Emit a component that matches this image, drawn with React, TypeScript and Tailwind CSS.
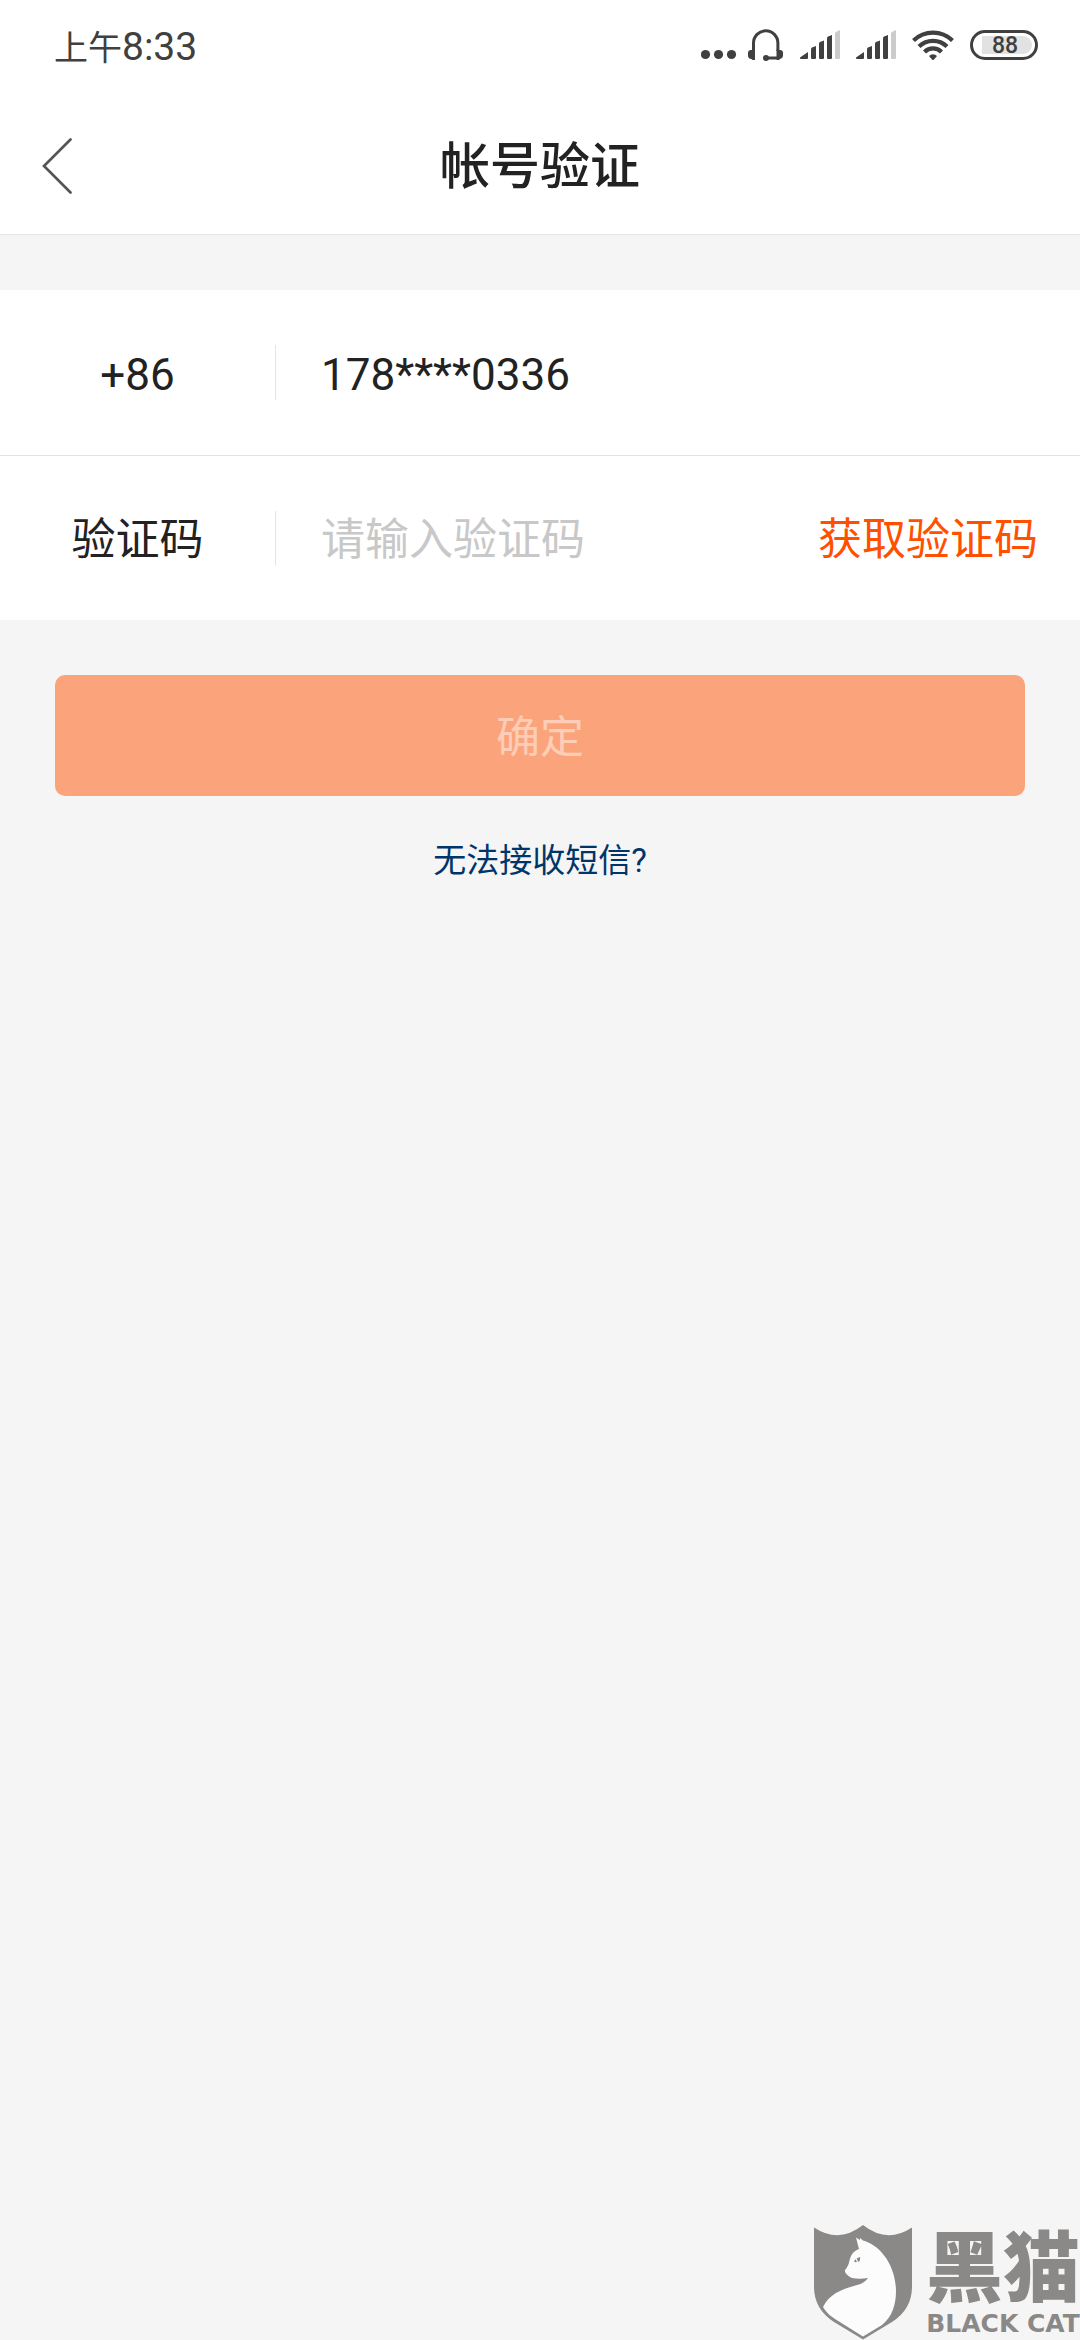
import React from "react";

const SignalIcon: React.FC<{ className?: string }> = ({ className }) => (
  <svg viewBox="0 0 40 30" className={`w-10 h-[30px] ${className ?? ""}`} aria-hidden="true">
    <g fill="#404040">
      <path d="M0 27.500 8 22v6a1 1 0 0 1-1 1H1a1 1 0 0 1-1-1.500Z" />
      <path d="M11 19.500Q11 18 12 17.500L16 16v12a1 1 0 0 1-1 1h-3a1 1 0 0 1-1-1Z" />
      <path d="M19 14Q19 12.500 20 12L24 10.500V28a1 1 0 0 1-1 1h-3a1 1 0 0 1-1-1Z" />
      <path d="M27 8.500Q27 7 28 6.500L32 5v23a1 1 0 0 1-1 1h-3a1 1 0 0 1-1-1Z" />
    </g>
    <path d="M35 4Q35 2.500 36 2L40 0v28a1 1 0 0 1-1 1h-3a1 1 0 0 1-1-1Z" fill="#cbcbcb" />
  </svg>
);

const StatusBar: React.FC = () => {
  return (
    <div className="flex items-center justify-between h-[90px] pl-[54px] pr-[42px] text-[#404040]">
      <div className="flex items-baseline pt-1">
        <span className="text-[34px]">上午</span>
        <span className="text-[39px]">8:33</span>
      </div>
      <div className="flex items-center">
        <svg viewBox="0 0 36 30" className="w-9 h-[30px]" fill="#404040" aria-hidden="true">
          <circle cx="4.500" cy="24.500" r="4.600" />
          <circle cx="17.500" cy="24.500" r="4.600" />
          <circle cx="30.500" cy="24.500" r="4.600" />
        </svg>
        <svg viewBox="0 0 36 32" className="w-9 h-8 ml-[11px]" aria-hidden="true">
          <path
            d="M5.500 22V14a12.200 12.200 0 0 1 24.400 0v8M18 29h12"
            fill="none"
            stroke="#404040"
            strokeWidth="3"
          />
          <path
            d="M7 20.500v10.500H4.500L3.500 30A3.500 3.500 0 0 1 0 27v-3a3 3 0 0 1 3-3ZM28.500 20.500V31H31l1-1a3.500 3.500 0 0 0 3-3v-3a3 3 0 0 0-3-3Z"
            fill="#404040"
          />
          <circle cx="18" cy="29" r="3" fill="#404040" />
        </svg>
        <SignalIcon className="ml-4" />
        <SignalIcon className="ml-4" />
        <svg viewBox="0 0 42 30" className="w-[42px] h-[30px] ml-4" aria-hidden="true">
          <g fill="none" stroke="#404040" strokeWidth="4.200">
            <path d="M1.500 10.500a28 28 0 0 1 39 0" />
            <path d="M7 16.500a20 20 0 0 1 28 0" />
            <path d="M12.500 22a12 12 0 0 1 17 0" />
          </g>
          <path d="M17 26a5.500 5.500 0 0 1 8 0l-3 3.500a1.300 1.300 0 0 1-2 0Z" fill="#404040" />
        </svg>
        <div className="flex items-center w-[68px] h-[30px] ml-4 pl-[9px] pr-[3px] rounded-full border-3 border-[#404040]">
          <span className="flex-1 h-[18px] pr-1 rounded-r-full bg-[#e2e2e2] text-center text-[23px] leading-[19px] font-medium">
            88
          </span>
        </div>
      </div>
    </div>
  );
};

const Header: React.FC = () => {
  return (
    <header className="bg-white border-b border-[#e5e5e5]">
      <StatusBar />
      <div className="grid grid-cols-[1fr_auto_1fr] items-center h-36 pt-2 px-[42px]">
        <button type="button" aria-label="返回" className="justify-self-start">
          <svg viewBox="0 0 30 56" className="w-[30px] h-14" aria-hidden="true">
            <path
              d="M28.500 1.500 2 28l26.500 26.500"
              fill="none"
              stroke="#555555"
              strokeWidth="2.700"
              strokeLinecap="round"
            />
          </svg>
        </button>
        <h1 className="pt-[2px] text-[50px] leading-none font-medium">帐号验证</h1>
      </div>
    </header>
  );
};

const Watermark: React.FC = () => {
  return (
    <div className="flex items-end justify-end gap-[14px] mt-auto text-[#8b8888]">
      <svg viewBox="0 0 98 115" className="w-[98px] h-[115px]" aria-hidden="true">
        <path
          d="M0 2.500Q25 19 49 0Q73 19 98 2.500V62Q98 84 78 97L49 114.500 20 97Q0 84 0 62Z"
          fill="#8b8888"
        />
        <path
          d="M42 12.500l4 2.500V13l3 2.500C71 22 82 46 82 66c0 14-4 26-14 34L49 111.500 21 94Q13 89 9 82c7-14 20-18 34-22 5-1 9-4 11-7-6 1-11 1-16 0-3-1-8-5-7-8 4-4 4-9 6-14 2-4 5-6 8-7Z"
          fill="#fcfcfc"
        />
        <path d="M40 36q2-3 6-4 1 5-3 5-2 1-3-1Z" fill="#8b8888" />
        <path d="M42 33.500l1.500 3.500" stroke="#fcfcfc" strokeWidth="1.200" />
      </svg>
      <div className="flex flex-col items-center">
        <span className="text-[77px] leading-[76px] font-black">黑猫</span>
        <span className="font-['DejaVu_Sans'] text-[25px] leading-8 font-bold">BLACK CAT</span>
      </div>
    </div>
  );
};

const App: React.FC = () => {
  return (
    <div
      lang="zh-CN"
      className="flex flex-col min-h-screen bg-[#f5f5f5] text-[#222222] font-[Roboto,'Noto_Sans_CJK_SC',sans-serif]"
    >
      <Header />
      <form className="mt-[55px] text-[44px]">
        <div className="flex items-center h-[166px] bg-white border-b border-[#e2e2e2]">
          <span className="w-[275px] pt-1 text-center">+86</span>
          <span className="h-[55px] border-l border-[#e5e5e5]" />
          <span className="ml-[45px] pt-1">178****0336</span>
        </div>
        <div className="flex items-center h-[164px] pr-[42px] bg-white">
          <label htmlFor="code" className="w-[275px] pt-1 text-center">
            验证码
          </label>
          <span className="h-[55px] border-l border-[#e5e5e5]" />
          <input
            id="code"
            type="text"
            placeholder="请输入验证码"
            className="flex-1 min-w-0 ml-[45px] pt-1 outline-none placeholder:text-[#c8c8c8]"
          />
          <button type="button" className="pt-1 text-[#ff5000]">
            获取验证码
          </button>
        </div>
        <div className="px-[55px] pt-[55px]">
          <button
            type="submit"
            disabled
            className="w-full h-[121px] pt-1 rounded-[10px] bg-[#fba47c] text-[#fdcdb7]"
          >
            确定
          </button>
        </div>
      </form>
      <a href="#help" className="self-center mt-10 text-[33px] text-[#003569]">
        无法接收短信?
      </a>
      <Watermark />
    </div>
  );
};

export default App;
